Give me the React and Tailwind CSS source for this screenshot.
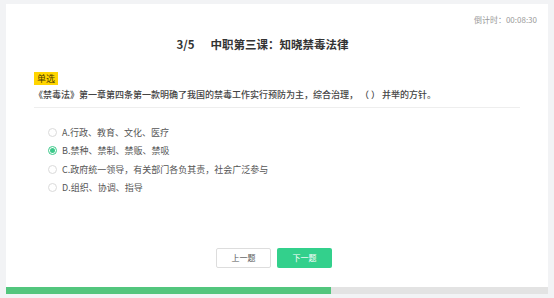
const options = [
  { key: 'A', text: 'A.行政、教育、文化、医疗' },
  { key: 'B', text: 'B.禁种、禁制、禁贩、禁吸' },
  { key: 'C', text: 'C.政府统一领导，有关部门各负其责，社会广泛参与' },
  { key: 'D', text: 'D.组织、协调、指导' },
];

const Radio = ({ checked }) => (
  <span
    className={
      checked
        ? 'flex h-[9px] w-[9px] items-center justify-center rounded-full border border-[#3cc98a] bg-white'
        : 'h-[9px] w-[9px] rounded-full border border-[#dadada] bg-white'
    }
  >
    {checked && <span className="h-[5px] w-[5px] rounded-full bg-[#3cc98a]" />}
  </span>
);

const App = () => {
  const selected = 'B';
  const progress = 60;

  return (
    <div className="h-[298px] w-[554px] bg-[#f2f3f5] px-[6px] pt-[4px] font-['Noto_Sans_CJK_SC','Noto_Sans',sans-serif]">
      <div className="flex h-[290px] flex-col bg-white">
        {/* Timer */}
        <div className="flex justify-end pr-[11px] pt-[11px] text-[8px] leading-[10px] text-[#999]">
          倒计时：00:08:30
        </div>

        {/* Title */}
        <h1 className="mt-[11px] pr-[29px] text-center text-[11.5px] font-bold leading-[16px] text-[#333]">
          3/5<span className="ml-[16px]">中职第三课：知晓禁毒法律</span>
        </h1>

        <div className="px-[28px]">
          {/* Question */}
          <div className="mt-[20px] flex">
            <span className="flex h-[13px] items-center bg-[#ffd500] px-[3px] text-[9px] leading-[13px] text-[#4a3b00]">
              单选
            </span>
          </div>
          <p className="mt-[4px] border-b border-[#eeeeee] pb-[6px] text-[9px] font-medium leading-[12px] text-[#444]">
            《禁毒法》第一章第四条第一款明确了我国的禁毒工作实行预防为主，综合治理， （ ） 并举的方针。
          </p>

          {/* Options */}
          <ul className="mt-[15px] flex flex-col pl-[14px]">
            {options.map((o) => (
              <li key={o.key} className="flex h-[18.5px] items-center gap-[5px] text-[9px] text-[#555]">
                <Radio checked={o.key === selected} />
                <span>{o.text}</span>
              </li>
            ))}
          </ul>
        </div>

        <div className="flex-1" />

        {/* Buttons */}
        <div className="flex justify-center gap-[6px] pr-[6px]">
          <button className="h-[20px] w-[55px] rounded-[2px] border border-[#dddddd] bg-white text-[8px] text-[#555]">
            上一题
          </button>
          <button className="h-[20px] w-[55px] rounded-[2px] bg-[#33d08c] text-[8px] text-white">
            下一题
          </button>
        </div>

        {/* Progress */}
        <div className="mt-[19px] h-[7px] w-full bg-[#e3e3e3]">
          <div className="h-full bg-[#52c67d]" style={{ width: `${progress}%` }} />
        </div>
      </div>
    </div>
  );
};

export default App;
